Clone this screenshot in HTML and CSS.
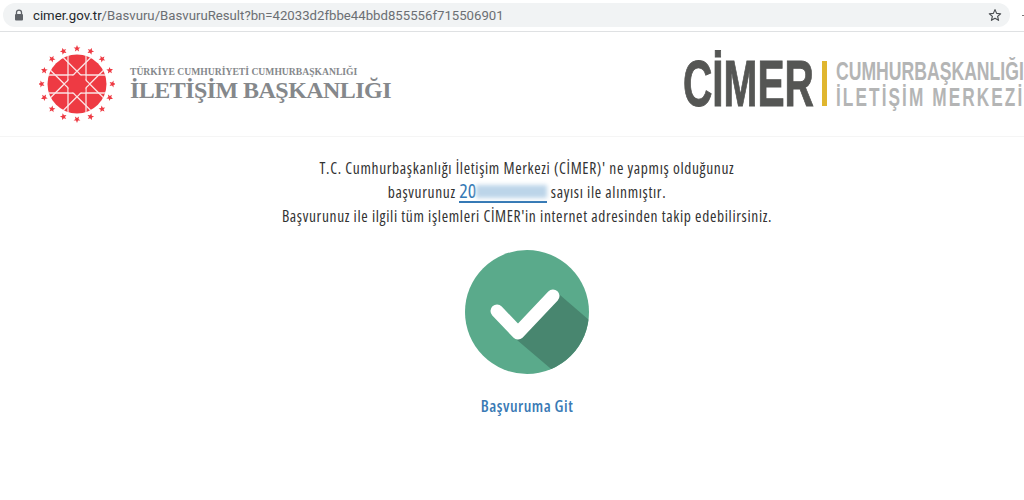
FILE: index.html
```html
<!DOCTYPE html>
<html lang="tr">
<head>
    <meta charset="UTF-8">
    <title>CİMER Başvuru</title>
    <link rel="stylesheet" href="styles.css">
</head>
<body>
    <!-- browser toolbar -->
    <div class="toolbar">
        <div class="address-bar">
            <svg class="lock" width="10" height="12" viewBox="0 0 10 12">
                <path d="M2.5 5V3.6a2.5 2.5 0 0 1 5 0V5" fill="none" stroke="#5f6368" stroke-width="1.3"/>
                <rect x="1" y="5" width="8" height="6.4" rx="1" fill="#5f6368"/>
            </svg>
            <span class="url"><span class="host">cimer.gov.tr</span>/Basvuru/BasvuruResult?bn=42033d2fbbe44bbd855556f715506901</span>
            <svg class="star" width="14" height="14" viewBox="0 0 24 24">
                <path d="M12 2.8l2.8 6.4 6.9.6-5.2 4.6 1.6 6.8-6.1-3.6-6.100 3.600 1.600-6.800-5.200-4.600 6.900-.6z" fill="none" stroke="#4a4d50" stroke-width="2" stroke-linejoin="round"/>
            </svg>
        </div>
        <div class="menu-edge"></div>
    </div>

    <header class="site-header">
        <div class="brand">
            <svg class="emblem" width="76" height="80" viewBox="-38 -40 76 80">
                <defs>
                    <clipPath id="discClip"><circle r="29.500"/></clipPath>
                    <polygon id="tinyStar" points="0,-3.400 1,-1.100 3.400,-1 1.500,.5 2.100,2.900 0,1.600 -2.100,2.900 -1.500,.5 -3.400,-1 -1,-1.100" fill="#ee3a43"/>
                    <use id="starAt" href="#tinyStar" y="-35.500"/>
                </defs>
                <circle r="29.500" fill="#ee3a43"/>
                <g clip-path="url(#discClip)" stroke="#fbe3e4" stroke-width="1.300">
                    <path d="M-9-31V31M9-31V31M-31-9H31M-31 9H31"/>
                    <path d="M-9-31V31M9-31V31M-31-9H31M-31 9H31" transform="rotate(45)"/>
                </g>
                <rect x="-8.300" y="-8.300" width="16.600" height="16.600" fill="#ee3a43"/>
                <rect x="-8.300" y="-8.300" width="16.600" height="16.600" fill="#ee3a43" transform="rotate(45)"/>
                <use href="#starAt"/>
                <use href="#starAt" transform="rotate(22.500)"/>
                <use href="#starAt" transform="rotate(45)"/>
                <use href="#starAt" transform="rotate(67.500)"/>
                <use href="#starAt" transform="rotate(90)"/>
                <use href="#starAt" transform="rotate(112.500)"/>
                <use href="#starAt" transform="rotate(135)"/>
                <use href="#starAt" transform="rotate(157.500)"/>
                <use href="#starAt" transform="rotate(180)"/>
                <use href="#starAt" transform="rotate(202.500)"/>
                <use href="#starAt" transform="rotate(225)"/>
                <use href="#starAt" transform="rotate(247.500)"/>
                <use href="#starAt" transform="rotate(270)"/>
                <use href="#starAt" transform="rotate(292.500)"/>
                <use href="#starAt" transform="rotate(315)"/>
                <use href="#starAt" transform="rotate(337.500)"/>
            </svg>
            <div class="brand-text">
                <div class="brand-top">TÜRKİYE CUMHURİYETİ CUMHURBAŞKANLIĞI</div>
                <div class="brand-main">İLETİŞİM BAŞKANLIĞI</div>
            </div>
        </div>
        <svg class="cimer-logo" width="341" height="82" viewBox="0 0 341 82">
            <text class="cimer-word" transform="translate(0 65) scale(.625 1)">CİMER</text>
            <rect x="139" y="20" width="5" height="45" fill="#e0b62f"/>
            <text class="cimer-sub" transform="translate(153 39) scale(.705 1)">CUMHURBAŞKANLIĞI</text>
            <text class="cimer-sub cimer-spaced" transform="translate(153 65) scale(.69 1)">İLETİŞİM MERKEZİ</text>
        </svg>
    </header>

    <main class="result">
        <p class="line">T.C. Cumhurbaşkanlığı İletişim Merkezi (CİMER)' ne yapmış olduğunuz</p>
        <p class="line">başvurunuz <a class="ref-no" href="#">20<span class="ref-blur"></span></a> sayısı ile alınmıştır.</p>
        <p class="line">Başvurunuz ile ilgili tüm işlemleri CİMER'in internet adresinden takip edebilirsiniz.</p>

        <svg class="check" width="124" height="124" viewBox="0 0 124 124">
            <defs><clipPath id="checkClip"><circle cx="62" cy="62" r="62"/></clipPath></defs>
            <circle cx="62" cy="62" r="62" fill="#5aaa8b"/>
            <polygon points="52,90 92,124 124,124 124,70 95,45 60,80" fill="#48866f" clip-path="url(#checkClip)"/>
            <path d="M32 61L53 83L88 46" fill="none" stroke="#fff" stroke-width="13" stroke-linecap="round" stroke-linejoin="round"/>
        </svg>

        <a class="go-link" href="#">Başvuruma Git</a>
    </main>
</body>
</html>
```

FILE: styles.css
```css
* {
    margin: 0;
    padding: 0;
    box-sizing: border-box;
}

html, body {
    overflow: hidden;
}

body {
    background: #fff;
    width: 1024px;
    height: 500px;
    font-family: "Open Sans", sans-serif;
}

.toolbar {
    height: 32px;
    padding: 3px 0 0 3px;
    display: flex;
    border-bottom: 1px solid #dfe1e3;
}

.address-bar {
    width: 1007px;
    height: 24px;
    background: #f1f3f4;
    border-radius: 12px;
    display: flex;
    align-items: center;
    padding: 0 8px 0 11px;
}

.url {
    margin-left: 9px;
    font-family: "Roboto", sans-serif;
    font-size: 13.200px;
    color: #6b6f73;
    white-space: nowrap;
    flex: 1;
}

.host {
    color: #25282b;
}

.menu-edge {
    width: 2px;
    height: 1px;
    margin: 12px 0 0 12px;
    background: #777;
}

.site-header {
    height: 105px;
    display: flex;
    justify-content: space-between;
    border-bottom: 1px solid #f5f5f5;
    overflow: hidden;
}

.brand {
    display: flex;
    align-items: center;
    padding-left: 39px;
    height: 104px;
}

.brand-text {
    margin-left: 15px;
    font-family: "Liberation Serif", serif;
    font-weight: bold;
    color: #85888b;
}

.brand-top {
    font-size: 9.650px;
    line-height: 12px;
    white-space: nowrap;
}

.brand-main {
    font-size: 24px;
    line-height: 25px;
    letter-spacing: -0.550px;
    white-space: nowrap;
}

.cimer-logo {
    flex-shrink: 0;
    margin-top: 9px;
}

.cimer-word {
    font-family: "Liberation Sans", sans-serif;
    font-weight: bold;
    font-size: 65px;
    fill: #555654;
    stroke: #555654;
    stroke-width: 1;
}

.cimer-sub {
    font-family: "Liberation Sans", sans-serif;
    font-weight: bold;
    font-size: 25px;
    fill: #b4b5b5;
}

.cimer-spaced {
    letter-spacing: 3px;
}

.result {
    display: flex;
    flex-direction: column;
    align-items: center;
    padding: 19px 0 0 30px;
    color: #333;
}

.line {
    font-size: 15.500px;
    font-stretch: 75%;
    letter-spacing: 0.650px;
    line-height: 24px;
    white-space: nowrap;
}

.ref-no {
    display: inline-block;
    font-size: 20px;
    line-height: 20px;
    letter-spacing: 0;
    color: #3579b5;
    text-decoration: none;
    border-bottom: 2px solid #3579b5;
}

.ref-blur {
    display: inline-block;
    width: 71px;
    height: 13px;
    background: #bcd5e9;
    filter: blur(2px);
}

.check {
    margin-top: 22px;
}

.go-link {
    margin-top: 21px;
    font-size: 16px;
    font-stretch: 75%;
    font-weight: 600;
    letter-spacing: 0.500px;
    color: #3a7ab5;
    text-decoration: none;
}
```
